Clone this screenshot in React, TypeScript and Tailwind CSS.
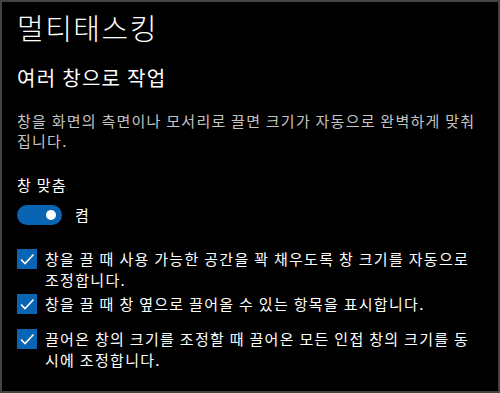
import { useState } from 'react';

const font = { fontFamily: '"Noto Sans CJK KR", "Noto Sans", sans-serif' };

function CheckRow({ label, className = '' }: { label: string; className?: string }) {
  const [checked, setChecked] = useState(true);
  return (
    <label className={`flex items-start gap-[8px] cursor-pointer ${className}`}>
      <button
        type="button"
        onClick={() => setChecked(!checked)}
        className={`flex h-5 w-5 shrink-0 items-center justify-center ${
          checked ? 'bg-[#0a64b4]' : 'border-2 border-white'
        }`}
      >
        {checked && (
          <svg viewBox="0 0 20 20" className="h-5 w-5" fill="none">
            <path d="M4 10.5 L8 14.5 L16.5 5.5" stroke="white" strokeWidth="1.6" />
          </svg>
        )}
      </button>
      <span className="-mt-[1px] text-[15px] leading-[21px] tracking-[1.3px] text-white">{label}</span>
    </label>
  );
}

export default function App() {
  const [on, setOn] = useState(true);

  return (
    <div
      className="h-[393px] w-[500px] overflow-hidden border-2 border-[#434343] bg-black px-[15px] text-white"
      style={font}
    >
      <h1 className="mt-[6px] text-[29px] font-light leading-[38px] tracking-[1.5px]">멀티태스킹</h1>
      <h2 className="mt-[18px] text-[20px] leading-[28px] tracking-[1.3px]">여러 창으로 작업</h2>
      <p className="mt-[19px] pr-[2px] text-[15px] leading-[20px] tracking-[1.25px] text-[#c4c4c4]">
        창을 화면의 측면이나 모서리로 끌면 크기가 자동으로 완벽하게 맞춰집니다.
      </p>

      <div className="mt-[24px] text-[15px] leading-[20px] tracking-[1.3px]">창 맞춤</div>
      <div className="mt-[10px] flex items-center gap-[13px]">
        <button
          type="button"
          onClick={() => setOn(!on)}
          className={`relative h-5 w-[45px] rounded-full ${on ? 'bg-[#0a64b4]' : 'border-2 border-white'}`}
        >
          <span
            className={`absolute top-[5px] h-[10px] w-[10px] rounded-full bg-white ${
              on ? 'left-[29px]' : 'left-[5px]'
            }`}
          />
        </button>
        <span className="text-[15px] leading-[20px]">{on ? '켬' : '끔'}</span>
      </div>

      <div className="mt-[24px] flex flex-col">
        <CheckRow label="창을 끌 때 사용 가능한 공간을 꽉 채우도록 창 크기를 자동으로 조정합니다." />
        <CheckRow className="mt-[4px]" label="창을 끌 때 창 옆으로 끌어올 수 있는 항목을 표시합니다." />
        <CheckRow className="mt-[15px]" label="끌어온 창의 크기를 조정할 때 끌어온 모든 인접 창의 크기를 동시에 조정합니다." />
      </div>
    </div>
  );
}
